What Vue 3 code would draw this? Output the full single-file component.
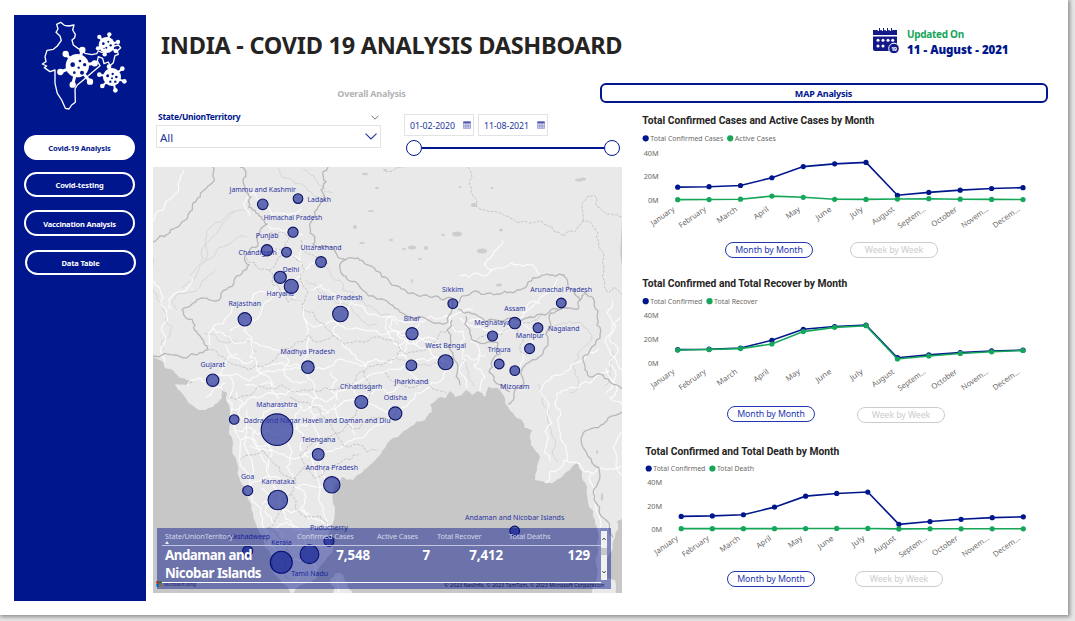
<script setup>
const nav = [
  { label: 'Covid-19 Analysis', cls: 'active' },
  { label: 'Covid-testing', cls: '' },
  { label: 'Vaccination Analysis', cls: 'third' },
  { label: 'Data Table', cls: 'fourth' },
]

const months = ['January', 'February', 'March', 'April', 'May', 'June', 'July', 'August', 'Septem...', 'October', 'Novem...', 'Decem...']
const monthLen = [27, 31, 23, 16.5, 15.5, 17.5, 14, 25.5, 32, 29.5, 31, 31]
const confirmed = [10.7, 11.1, 12.1, 18.6, 28, 30.3, 31.5, 3.9, 6.3, 8.2, 9.6, 10.3]
const recover = [10.4, 10.8, 11.6, 15.5, 26, 29.6, 31, 2.8, 5.4, 7.5, 8.9, 10]
const active = [0.2, 0.3, 0.6, 3.2, 2.2, 0.5, 0.4, 0.7, 1, 0.6, 0.4, 0.3]
const deaths = [0.2, 0.2, 0.2, 0.2, 0.3, 0.4, 0.4, 0, 0.1, 0.1, 0.1, 0.1]

function build(c) {
  const pts = (d) => d.map((v, i) => [c.x0 + i * c.dx, c.y0 - v * c.scale])
  return { ...c, a: pts(confirmed), b: pts(c.data) }
}
const charts = [
  { id: 1, title: 'Total Confirmed Cases and Active Cases by Month', tx: 642.3, tw: 232, ty: 124.4, l1: 'Total Confirmed Cases', l1w: 73, l2: 'Active Cases', l2w: 41, lx2: 730.2, ly: 138.3, x0: 677.7, dx: 31.39, y0: 199.9, scale: 1.19, data: active, top: 110, h: 125 },
  { id: 2, title: 'Total Confirmed and Total Recover by Month', tx: 642.3, tw: 205, ty: 287, l1: 'Total Confirmed', l1w: 52, l2: 'Total Recover', l2w: 43.5, lx2: 709.5, ly: 301.2, x0: 677.7, dx: 31.39, y0: 362.3, scale: 1.18, data: recover, top: 275, h: 125 },
  { id: 3, title: 'Total Confirmed and Total Death by Month', tx: 645.3, tw: 194, ty: 455, l1: 'Total Confirmed', l1w: 52, l2: 'Total Death', l2w: 37, lx2: 712.4, ly: 468.5, x0: 681.2, dx: 31.1, y0: 528.9, scale: 1.17, data: deaths, top: 443, h: 122 },
].map(build)
const line = (p) => p.map((q) => q.join(',')).join(' ')

// [label, left, right, baseline, cx, cy, r]
const states = [
  ['Jammu and Kashmir', 229.5, 296, 192, 262.7, 204.3, 5.3],
  ['Ladakh', 307.5, 331, 202, 298, 198.6, 4.8],
  ['Himachal Pradesh', 263.7, 322.3, 220, 293, 232.2, 5.1],
  ['Punjab', 255.7, 278.5, 238, 267, 250.3, 5.7],
  ['Chandigarh', 238.5, 276.7, 255, 286.5, 252.2, 4.9],
  ['Uttarakhand', 300.5, 341.5, 250, 321, 262, 5.4],
  ['Delhi', 282.8, 299.3, 272, 280.2, 277.3, 6.1],
  ['Haryana', 266.5, 294, 296, 291.3, 286.3, 7.1],
  ['Uttar Pradesh', 317.5, 362.5, 300, 340.4, 314, 7.8],
  ['Rajasthan', 228.5, 261, 306, 244.8, 319.3, 6.7],
  ['Madhya Pradesh', 280.5, 335, 354.3, 307.9, 367.2, 6.3],
  ['Gujarat', 200.5, 225, 367.3, 212.7, 380.2, 6.2],
  ['Sikkim', 442, 463.5, 292, 452.8, 303.6, 4.9],
  ['Arunachal Pradesh', 530.3, 592, 292, 561.3, 303, 4.9],
  ['Bihar', 403.7, 420.3, 321, 412, 333.7, 6.1],
  ['Assam', 504.3, 525.5, 311, 514.8, 323, 5.8],
  ['Meghalaya', 474.3, 510.5, 324.5, 492.5, 336, 5],
  ['Nagaland', 548, 579.5, 331, 538, 327.8, 4.9],
  ['Manipur', 515.8, 544, 337.5, 529.6, 348.6, 5],
  ['West Bengal', 425.3, 466, 348, 445.6, 362.3, 7.5],
  ['Tripura', 487.7, 510.7, 352, 499.2, 364, 4.9],
  ['Mizoram', 500, 529.5, 389, 514.8, 370.6, 4.9],
  ['Jharkhand', 394.5, 428.3, 384, 411.4, 365.4, 5.4],
  ['Chhattisgarh', 340, 382.3, 389, 361.3, 402, 6.5],
  ['Odisha', 383.7, 407, 400, 395.3, 413.5, 6.6],
  ['Maharashtra', 256.3, 297.3, 407, 277, 429.7, 15.8],
  ['Dadra and Nagar Haveli and Daman and Diu', 243.7, 390.5, 423, 234.2, 419.5, 4.8],
  ['Telengana', 301.5, 335.3, 442, 318.2, 454.4, 5.9],
  ['Andhra Pradesh', 305.5, 358, 470, 331.8, 484.8, 8.2],
  ['Goa', 241, 254.3, 479, 247.7, 490.7, 5],
  ['Karnataka', 261.5, 294.5, 484, 277.8, 500, 9.8],
  ['Puducherry', 310, 347.7, 530, 329, 541.3, 5],
  ['Lakshadweep', 226.3, 270, 539, 247.7, 551, 5],
  ['Kerala', 271.3, 291.5, 545, 281.3, 562.3, 11],
  ['Tamil Nadu', 291.3, 328, 576, 309.5, 554.2, 9.4],
  ['Andaman and Nicobar Islands', 465, 564.3, 520, 514.7, 531, 4.9],
]

// Deterministic midpoint jitter, gives coasts and borders an irregular edge
let seed = 11
const rnd = () => ((seed = (seed * 16807) % 2147483647) / 2147483647) - 0.5
function rough(str, closed = false, amp = 0.3) {
  const p = str.trim().split(/\s+/).map((s) => s.split(',').map(Number))
  if (closed) p.push(p[0])
  let out = p
  for (let k = 0; k < 2; k++) {
    const next = [out[0]]
    for (let i = 1; i < out.length; i++) {
      const [x1, y1] = out[i - 1]
      const [x2, y2] = out[i]
      const o = rnd() * amp * 1.6
      next.push([(x1 + x2) / 2 - (y2 - y1) * o, (y1 + y2) / 2 + (x2 - x1) * o], [x2, y2])
    }
    out = next
  }
  return 'M' + out.map((q) => q[0].toFixed(1) + ' ' + q[1].toFixed(1)).join('L') + (closed ? 'Z' : '')
}

const land = rough('150,164 625,164 625,517 617,521 615,537 613,547 605,560 605,577 615,580 617,596 592,596 595,583 597,567 598,550 598,533 595,520 588,503 587,487 582,472 577,463 572,467 562,477 552,483 535,480 537,470 540,457 535,450 530,438 532,430 525,428 522,420 513,413 505,403 500,390 497,388 488,387 485,397 478,391 472,395 466,390 455,397 451,391 446,398 438,398 430,405 432,412 425,420 410,427 398,437 385,448 380,455 367,468 357,475 353,480 342,477 333,493 335,507 333,523 330,540 332,553 323,563 317,577 310,583 298,587 292,594 282,583 273,570 265,547 258,530 253,513 247,497 241,483 237,463 233,443 230,423 230,410 227,393 222,390 222,398 213,407 202,410 192,405 182,393 175,384 186,385 193,382 187,380 175,373 165,368 160,360 150,357', true, 0.18)
const lanka = rough('332,595 330,580 337,573 347,583 352,595', true)

const borders = [
  '153,242 160,236 168,234 175,228 182,222 188,215 193,203 200,197 204,190 212,183 213,175 213,167',
  '240,167 246,172 243,180 245,190 251,197 249,207 256,213 262,219 268,224 260,231 258,243 250,249 245,256 249,265 243,271 235,278 229,287 221,297 209,300 199,299 192,304 182,310 186,318 195,325 198,334 204,343 207,350 198,354 190,355 176,355 153,356',
  '328,167 323,172 326,182 321,190 325,198 318,207 314,218 310,227 315,237 313,244 318,247 327,247 337,255 345,260 340,268 342,274 348,280 360,287 373,296 390,304',
  '345,260 358,258 365,264 376,271 382,277 389,281 397,286 406,291 415,294 424,295 433,297 443,300 452,298 452,310 448,322 430,321 415,319 400,312 390,304',
  '458,303 462,296 475,291 488,293 500,294 510,292 520,290 528,282 540,277 550,275 560,274 566,278 568,287 575,290 580,300 578,309 568,308 557,309 545,315 530,317 512,318 495,320 478,316 465,313 458,309',
  '452,320 447,330 451,342 453,353 458,367 460,385',
  '466,316 470,330 474,341 488,342 498,343 500,354 492,361 489,372 496,383 504,386 510,392',
  '568,308 556,311 549,318 546,334 545,348 539,357 526,364 524,383 514,398 508,404',
  '580,300 585,292 593,298 598,311 597,325 600,338 590,350 583,357 585,370 592,377 600,374 610,382 622,389',
  '622,412 608,418 601,425 588,430 581,438 584,449 592,463 600,476 594,489 596,503 606,520 613,537',
]
const dashed = [
  '385,171 397,168 405,167', '468,167 470,180 473,196 476,205 485,210 500,213 510,218 524,221 537,222 547,225 554,231 564,236 574,232 583,221 592,225 598,233 601,250 604,266 604,280 607,292 614,287 622,300',
  '583,221 582,205 588,196 596,197 600,208 611,214 622,217',
  '246,258 255,263 263,269 272,268 279,257 290,254 297,260 305,270 300,280 308,292 302,305 313,312 324,324 333,335 318,342 308,335 295,344 282,350 274,360 263,367 248,370 236,365 224,357 207,350',
  '268,270 273,285 283,294 288,302 296,300 302,305', '333,335 344,344 361,342 377,337 391,340 401,350 390,360 376,364 364,371 353,383 342,388 325,387 308,391 290,390 271,388 257,387 243,396 228,398',
  '364,371 370,387 365,402 356,412 347,424 336,433 330,420 320,410 305,402 290,397', '336,433 343,445 357,444 367,452 378,450', '347,424 360,428 372,417 389,421 398,410',
  '336,433 326,440 308,446 300,455 304,468 314,478 323,475 336,464 350,460 359,454',
  '304,468 295,478 280,472 270,459 263,450 251,455 240,460', '295,478 291,494 295,509 306,517 320,516 327,524', '291,494 281,507 275,519 267,528 278,537 288,543 284,562 289,580',
  '385,372 395,382 405,386 424,381 435,390 447,394', '401,350 414,352 430,344 440,332 448,330', '474,341 485,336 501,335 516,328 523,335 520,349 527,356', '516,328 530,323 543,314', '270,233 280,232 289,240 284,249 275,248', '301,240 305,252 318,257 329,264',
]
const thin = [
  '153,289 159,302 166,318 172,327 162,341 165,350', '182,288 195,278 203,263 216,252 231,243 247,237', '190,276 198,266 202,249 212,237 224,222 240,210 249,207', '201,265 205,242 208,229 225,218 235,211',
  '177,310 172,302 184,294 202,281 216,269', '278,168 286,178 295,184 307,190 323,196', '303,169 314,176 320,185 333,193', '323,264 331,276 343,290 359,300 374,309 390,315', '305,280 320,293 329,299 345,304 362,321 377,325',
  '226,333 237,342 252,344 257,352', '204,333 218,341 233,339', '545,335 557,325 570,321 582,324 592,335 581,350 573,366 579,382 570,393',
  '538,384 543,397 549,412 551,430 552,452 558,462', '613,350 610,370 604,386', '463,360 469,372 474,386', '395,356 411,359 430,366 448,365',
]
const roads = [
  '153,222 163,210 173,197 178,183 184,170', '153,281 160,289 162,306 168,319 163,333 160,349 165,362', '171,309 169,299 182,292 193,279', '230,331 246,325 260,315 270,300 284,291', '213,328 223,333 231,340 247,339 261,346 278,350 290,350',
  '210,345 209,333 223,324 232,307 254,294 277,287', '250,216 246,200 253,191 262,202 272,215 288,215 301,209', '266,222 274,229 291,231 303,235', '264,258 267,250 279,250 290,256 301,260', '244,320 252,338 250,357 258,371 271,381 279,399',
  '291,287 300,302 304,318 318,326 335,321 351,329 370,331 391,331 413,334 430,342 447,350', '291,287 300,276 310,264 318,260', '303,266 301,250 309,246 323,249', '304,318 307,335 308,353 308,368 315,386 311,406 313,424 317,446 315,471 320,491 323,512 324,530',
  '308,368 291,369 273,372 257,377 243,378 229,375 215,376', '215,376 205,382 196,379 188,386', '215,376 222,370 227,361 238,354', '206,397 215,388 225,383', '229,375 232,391 232,409 235,430 240,451 244,469 252,490 261,508 264,529 274,548 283,568',
  '235,431 248,427 261,433 277,435 292,429 306,426 321,414 340,405 360,402 379,408 394,413 410,402 425,390 441,381 450,366',
  '256,371 270,365 285,365 304,370', '231,409 247,400 261,397 277,394 293,390 309,395 326,402 337,392 352,382 370,375 390,369 409,365 428,361 446,362',
  '321,450 335,449 345,444 360,438 372,429 388,417', '321,450 322,470 332,487', '250,446 264,449 279,454 294,459 311,451', '256,430 256,446 263,460 269,475 277,490 283,510 292,525 307,548 316,571', '262,505 278,502 291,513 309,514 325,524', '247,490 259,481 272,477 284,482 297,488 316,487 331,481',
  '333,315 341,302 331,293 321,285 311,290', '340,314 351,302 364,307 379,316 397,320 413,322 430,316 442,318 458,313 473,310', '391,317 385,328 395,344 406,357 412,374 420,388', '413,334 421,348 435,357 449,365', '397,332 408,340 404,355 391,363 376,359 361,366 346,361 329,367 308,368',
  '338,315 333,333 343,346 355,355 366,369', '447,316 450,326 463,331 461,347 465,360 461,374 467,388', '470,342 480,353 474,365 485,377 480,391', '464,355 475,360 486,355', '460,318 467,324 477,327 488,330 501,333 511,324 523,316 533,306 543,296 553,289 558,279', '508,326 522,324 536,330 532,342 525,353 520,366 517,377', '493,323 482,320 469,321', '541,303 528,304 521,313',
  '460,276 477,273 489,274 492,270 484,264 491,257 497,249 502,240', '491,270 502,268 511,263 524,266 535,268 540,274', '540,391 550,380 563,374 575,363 587,354 599,349', '557,393 567,390 581,384 596,376 610,371', '557,393 560,410 559,429 566,446 567,461', '539,391 549,406 552,423 547,442 550,461', '564,460 580,464 593,474 606,470 621,466', '564,460 550,471 545,483', '591,474 594,490 596,510 599,530 604,550',
  '612,300 607,313 616,326 609,338 618,352 609,364 614,380 606,393', '620,318 612,330 605,341 615,358 622,370', '606,368 616,385 610,398 622,405', '621,432 613,447 616,463 622,475', '608,523 600,538 600,557',
  '284,540 276,529 286,522 295,531 309,531', '309,554 299,561 288,558 280,564', '316,575 304,572 293,581', '339,577 339,595',
  '393,343 405,341 416,345 425,338 438,341', '398,325 392,319 389,327 401,332 411,328 420,323', '352,384 355,393 368,396 374,389 387,393 399,386', '335,404 338,418 349,423 355,435', '300,410 295,420 303,434 300,447 309,457', '247,410 251,421 262,418 270,409 284,406', '241,440 250,438 261,447 274,441 285,444', '280,356 289,361 285,375 294,382 307,382', '225,345 230,354 242,362 253,360',
  '236,392 243,403 240,417 247,432 245,447 252,462 249,477', '268,418 265,440 272,455 268,468', '285,408 296,404 304,411 318,405 329,413', '330,372 337,380 331,391 338,400', '288,440 292,452 287,467 293,478', '245,385 258,388 267,382 276,388', '262,488 270,497 265,512 274,524', '298,488 306,497 301,508 309,520',
]
const lakes = [
  [457, 234, 5, 2.5], [482, 251, 5, 2.5], [412, 247.5, 4, 2], [501, 230, 2, 1.5], [404, 249, 2, 1], [426, 248, 2, 2], [474, 205, 3, 2], [391, 240, 2, 1.2], [579, 180, 4, 1.6], [583, 179, 3, 1.6], [499, 285, 3, 1.5],
  [460, 187, 1.5, 1], [492, 188, 1.5, 1], [365, 174, 3, 1.3], [377, 188, 2, 1.2], [371, 211, 3, 1], [355, 227, 2, 2], [362, 243, 3, 1], [385, 170, 2, 1], [420, 259, 2, 1], [412, 281, 1, 2], [443, 235, 2, 1], [602, 497, 1.2, 4], [597, 452, 1, 2],
]
const landBorders = borders.map((b) => rough(b))
const dashPaths = dashed.map((b) => rough(b))
const thinPaths = thin.map((b) => rough(b))
const roadPaths = roads.map((b) => rough(b))

const viruses = [
  { c: [142, 152], r: 35, w: 9, k: 9.5, knobs: [[107, 117], [157, 105], [194, 145], [180, 200], [128, 209], [91, 171]], holes: [[128, 149, 7], [150, 138, 4], [164, 149, 5], [146, 158, 3.5], [133, 173, 4], [156, 173, 6]] },
  { c: [230, 90], r: 24, w: 6, k: 6.5, knobs: [[208, 66], [238, 58], [264, 81], [257, 108], [224, 118], [204, 100]], holes: [[220, 86, 4], [235, 80, 3], [242, 91, 3.5], [229, 98, 3], [222, 100, 2]] },
  { c: [246, 186], r: 27, w: 6, k: 7, knobs: [[237, 155], [277, 161], [283, 199], [256, 226], [217, 213], [208, 179]], holes: [[233, 182, 4.5], [248, 177, 3.5], [259, 186, 4], [246, 190, 3], [241, 200, 3.5], [256, 200, 3.5]] },
]
</script>

<template>
  <div class="canvas">
    <div class="page">
      <aside class="sidebar">
        <svg class="logo" viewBox="0 0 315 300">
          <path class="outline" d="M80 28L92 22L103 31L116 33L132 30L128 45L136 58L134 68L126 75L130 90L144 100L158 108L165 115L185 119L200 116L205 108L215 112L235 108L250 94L265 90L272 98L262 108L265 118L255 122L250 143L240 152L235 141L222 146L218 130L205 125L202 138L210 152L195 165L180 178L160 195L142 210L135 222L136 262L125 270L117 282L106 280L95 255L82 235L75 205L75 165L60 170L43 158L50 153L37 147L48 140L45 125L51 106L70 103L82 93L94 76L90 63L78 52L84 42Z" />
          <g v-for="(v, i) in viruses" :key="i">
            <line v-for="(k, j) in v.knobs" :key="j" :x1="v.c[0]" :y1="v.c[1]" :x2="k[0]" :y2="k[1]" stroke="#fff" :stroke-width="v.w" />
            <circle v-for="(k, j) in v.knobs" :key="'k' + j" :cx="k[0]" :cy="k[1]" :r="v.k" fill="#fff" />
            <circle :cx="v.c[0]" :cy="v.c[1]" :r="v.r" fill="#fff" />
            <circle v-for="(h, j) in v.holes" :key="'h' + j" :cx="h[0]" :cy="h[1]" :r="h[2]" fill="#00168c" />
          </g>
        </svg>
        <nav>
          <button v-for="n in nav" :key="n.label" :class="n.cls">{{ n.label }}</button>
        </nav>
      </aside>

      <main>
        <header>
          <h1>INDIA - COVID 19 ANALYSIS DASHBOARD</h1>
          <svg class="cal" viewBox="0 0 26 27">
            <path d="M0 2h24v5H0z M0 8.5h24v13L20 23H2a2 2 0 0 1-2-2z" fill="#14198a" />
            <path d="M6 0v3M10 0v3M14 0v3M18 0v3" stroke="#fff" stroke-width="2.4" />
            <path d="M6.5 0v3M10.5 0v3M14.5 0v3M18.5 0v3" stroke="#14198a" stroke-width="1" />
            <g fill="#fff">
              <circle v-for="x in [5, 10, 15, 19.7]" :key="x" :cx="x" cy="12.3" r="1.5" />
              <circle cx="5" cy="18" r="1.5" /><circle cx="10" cy="18" r="1.5" />
            </g>
            <circle cx="21" cy="20.5" r="5.3" fill="#14198a" stroke="#fff" stroke-width="1" />
            <text x="18" y="22.8" font-size="6" font-weight="700" fill="#fff" textLength="6">19</text>
          </svg>
          <div class="updated"><span>Updated On</span><strong>11 - August - 2021</strong></div>
        </header>

        <div class="tabs">
          <div class="tab">Overall Analysis</div>
          <div class="tab selected">MAP Analysis</div>
        </div>

        <div class="content">
          <section class="left">
            <div class="filters">
              <div class="state">
                <div class="statehead">
                  <span>State/UnionTerritory</span>
                  <svg width="8" height="5" viewBox="0 0 8 5"><path d="M.5 .7L4 4.2L7.5 .7" fill="none" stroke="#666" stroke-width=".9" /></svg>
                </div>
                <div class="select">
                  <span>All</span>
                  <svg width="12" height="7" viewBox="0 0 12 7"><path d="M.5 .6L6 6L11.5 .6" fill="none" stroke="#2236a0" stroke-width="1.1" /></svg>
                </div>
              </div>
              <div class="dates">
                <div class="inputs">
                  <div v-for="d in ['01-02-2020', '11-08-2021']" :key="d" class="date">
                    <span>{{ d }}</span>
                    <svg width="8" height="8" viewBox="0 0 8 8"><path d="M.4 1h7.2v6.4H.4zM.4 2.4h7.2M2.8 1v6M5.2 1v6M.4 5h7.2" fill="#d4d7ee" stroke="#7780c4" stroke-width=".6" /><path d="M.4 .4h7.2v1.6H.4z" fill="#4c58b0" /></svg>
                  </div>
                </div>
                <div class="slider"><i></i><b></b><i></i></div>
              </div>
            </div>

            <div class="map">
              <svg viewBox="153 167 469 426" width="469" height="426">
                <rect x="153" y="167" width="469" height="426" fill="#c7c7c7" />
                <path :d="land" fill="#e9e9e9" />
                <path :d="lanka" fill="#e9e9e9" />
                <ellipse v-for="(l, i) in lakes" :key="'l' + i" :cx="l[0]" :cy="l[1]" :rx="l[2]" :ry="l[3]" fill="#cdcdcd" />
                <path v-for="(p, i) in thinPaths" :key="'t' + i" class="thin" :d="p" />
                <path v-for="(p, i) in roadPaths" :key="'r' + i" class="road" :d="p" />
                <path v-for="(p, i) in dashPaths" :key="'d' + i" class="dash" :d="p" />
                <path v-for="(p, i) in landBorders" :key="'b' + i" class="border" :d="p" />
                <circle v-for="s in states" :key="'c' + s[0]" class="bubble" :cx="s[4]" :cy="s[5]" :r="s[6]" />
                <text v-for="s in states" :key="s[0]" class="place" :x="s[1]" :y="s[3]" :textLength="s[2] - s[1]" lengthAdjust="spacingAndGlyphs">{{ s[0] }}</text>
                <path d="M156 581h2.7v2.7H156z" fill="#f25022" /><path d="M159 581h2.7v2.7H159z" fill="#7fba00" />
                <path d="M156 584h2.7v2.7H156z" fill="#00a4ef" /><path d="M159 584h2.7v2.7H159z" fill="#ffb900" />
                <text x="164" y="586" class="credit" textLength="32" lengthAdjust="spacingAndGlyphs">Microsoft Bing</text>
                <text x="444.3" y="587.3" class="credit strong" textLength="160" lengthAdjust="spacingAndGlyphs">© 2023 NavInfo, © 2023 TomTom, © 2023 Microsoft Corporation</text>
              </svg>
              <div class="table">
                <div class="rows">
                  <div class="row head">
                    <span>State/UnionTerritory<em></em></span><span>Confirmed Cases</span><span>Active Cases</span><span>Total Recover</span><span>Total Deaths</span>
                  </div>
                  <div class="row body">
                    <span>Andaman and Nicobar Islands</span><span>7,548</span><span>7</span><span>7,412</span><span>129</span>
                  </div>
                </div>
                <div class="scroll">
                  <svg width="6" height="49" viewBox="0 0 6 49"><path d="M1.3 9L3 7L4.7 9M1.3 40L3 42L4.7 40" fill="none" stroke="#555" stroke-width="1" /><path d="M0 17h6v7H0z" fill="#c8c8c8" /></svg>
                </div>
              </div>
            </div>
          </section>

          <section class="right">
            <article v-for="c in charts" :key="c.id" :class="'chart chart' + c.id">
              <svg :viewBox="`640 ${c.top} 408 ${c.h}`" width="408" :height="c.h">
                <text class="title" :x="c.tx" :y="c.ty" :textLength="c.tw" lengthAdjust="spacingAndGlyphs">{{ c.title }}</text>
                <circle :cx="c.tx + 3.4" :cy="c.ly" r="3.1" fill="#00168c" />
                <text class="tick" :x="c.tx + 8" :y="c.ly + 2.9" :textLength="c.l1w" lengthAdjust="spacingAndGlyphs">{{ c.l1 }}</text>
                <circle :cx="c.lx2" :cy="c.ly" r="3.1" fill="#15a65a" />
                <text class="tick" :x="c.lx2 + 4.6" :y="c.ly + 2.9" :textLength="c.l2w" lengthAdjust="spacingAndGlyphs">{{ c.l2 }}</text>
                <text v-for="t in [40, 20, 0]" :key="t" class="tick" :x="c.x0 - (t ? 34 : 29.8)" :y="c.y0 + 3.2 - t * c.scale" :textLength="t ? 15 : 10.7" lengthAdjust="spacingAndGlyphs">{{ t }}M</text>
                <polyline :points="line(c.a)" fill="none" stroke="#00168c" stroke-width="1.6" />
                <circle v-for="(p, i) in c.a" :key="'a' + i" :cx="p[0]" :cy="p[1]" r="2.6" fill="#00168c" />
                <polyline :points="line(c.b)" fill="none" stroke="#15a65a" stroke-width="1.6" />
                <circle v-for="(p, i) in c.b" :key="'b' + i" :cx="p[0]" :cy="p[1]" r="2.6" fill="#15a65a" />
                <text v-for="(m, i) in months" :key="m" class="tick" text-anchor="end" :textLength="monthLen[i]" lengthAdjust="spacingAndGlyphs" :transform="`translate(${c.x0 + i * c.dx - 2.6} ${c.y0 + 10.5}) rotate(-35)`">{{ m }}</text>
              </svg>
              <div class="toggles"><button>Month by Month</button><button class="off">Week by Week</button></div>
            </article>
          </section>
        </div>
      </main>
    </div>
  </div>
</template>

<style>
body { margin: 0; overflow: hidden; }
</style>
<style scoped>
* { box-sizing: border-box; }
.canvas { width: 1075px; height: 621px; background: #e6e6e6; overflow: hidden; font-family: "Noto Sans", "Open Sans", sans-serif; }
.page { width: 1068px; height: 615px; background: #fff; display: flex; padding: 15px 0 0 14px; box-shadow: 1px 1px 4px 1px rgba(0, 0, 0, .38); }
.sidebar { width: 132px; height: 586px; background: #00168c; flex: none; }
.logo { display: block; width: 105px; height: 100px; margin: 0 0 0 16px; }
.outline { fill: none; stroke: #fff; stroke-width: 4; stroke-linejoin: round; }
nav { display: flex; flex-direction: column; padding: 20px 0 0 10px; }
button { font-family: inherit; padding: 0; margin: 0; white-space: nowrap; }
nav button { width: 111px; height: 25px; border: 2px solid #fff; border-radius: 13px; background: none; color: #fff; font-weight: 700; font-size: 7.5px; letter-spacing: -.12px; margin-bottom: 12px; line-height: 22px; }
nav .active { background: #fff; color: #00168c; }
nav .third { height: 26px; margin: 1px 0 14px; line-height: 24px; letter-spacing: -.19px; }
nav .fourth { margin-left: 1px; line-height: 23px; }
main { flex: 1; min-width: 0; }
header { display: flex; height: 68px; align-items: flex-start; }
h1 { margin: 13px 0 0 15px; width: 712px; font-size: 23.5px; line-height: 34px; font-weight: 700; color: #252423; letter-spacing: -.27px; white-space: nowrap; }
.cal { width: 26px; height: 27px; margin-top: 13px; flex: none; }
.updated { margin: 12px 0 0 8px; display: flex; flex-direction: column; white-space: nowrap; font-weight: 700; }
.updated span { color: #15a65a; font-size: 10px; line-height: 15px; letter-spacing: -.3px; }
.updated strong { color: #00168c; font-size: 11.5px; line-height: 16px; letter-spacing: -.1px; word-spacing: .3px; }
.tabs { display: flex; height: 20px; font-weight: 700; font-size: 9px; line-height: 21px; text-align: center; letter-spacing: -.2px; }
.tab { width: 451px; color: #b3b3b3; margin-right: 2.5px; }
.selected { width: 448px; border: 2px solid #00168c; border-radius: 6px; color: #00168c; line-height: 18px; margin: 0; }
.content { display: flex; padding-top: 7px; }
.left { width: 494px; padding-left: 7px; flex: none; }
.filters { display: flex; height: 57px; }
.state { width: 228px; margin-left: 3px; }
.statehead { display: flex; height: 15px; align-items: center; justify-content: space-between; padding: 0 5px 0 2px; font-size: 8.5px; font-weight: 700; color: #00168c; letter-spacing: -.3px; }
.statehead span { margin-top: -2px; }
.select { display: flex; align-items: center; justify-content: space-between; width: 225px; height: 23px; border: 1px solid #e3e3e3; padding: 0 3px; font-size: 11.5px; color: #2236a0; }
.select span { margin-top: 2px; }
.dates { width: 216px; margin-left: 20px; padding-top: 4px; }
.inputs { display: flex; gap: 4px; }
.date { width: 70px; height: 22px; border: 1px solid #e3e3e3; display: flex; align-items: center; justify-content: space-between; padding: 0 2px 0 5px; font-size: 8.8px; color: #2236a0; letter-spacing: -.1px; }
.date span { margin-top: 2px; }
.slider { display: flex; align-items: center; margin: 4px 0 0 2px; width: 214px; height: 16px; }
.slider i { width: 16px; height: 16px; border: 1.5px solid #00168c; border-radius: 50%; background: #fff; }
.slider b { flex: 1; height: 2px; background: #00168c; }
.map { position: relative; width: 469px; height: 426px; }
.map > svg { display: block; }
.border { fill: none; stroke: #b9b7b7; stroke-width: 1.3; }
.thin { fill: none; stroke: #cfcfcf; stroke-width: .7; }
.dash { fill: none; stroke: #bdbdbd; stroke-width: .8; stroke-dasharray: 3 1.2; }
.road { fill: none; stroke: #fcfcfc; stroke-width: 1.1; }
.bubble { fill: rgba(36, 51, 155, .7); stroke: #0b1163; stroke-width: 1.1; }
.place { font-size: 7.3px; fill: #2c35a0; }
.credit { font-size: 5px; fill: #36395a; }
.strong { fill: #111; }
.table { position: absolute; left: 4px; top: 361px; width: 454px; height: 61px; background: rgba(0, 16, 137, .46); display: flex; color: #fff; }
.rows { width: 444px; padding-left: 5px; }
.row { display: grid; grid-template-columns: 127px 75px 61px 79px 97px; width: 439px; }
.head { height: 18px; border-bottom: 1px solid #c2c5df; width: 439px; font-size: 7.3px; line-height: 17px; color: #d4d7e8; letter-spacing: -.1px; }
.head span { white-space: nowrap; padding-left: 3px; }
.head span:nth-child(n+2) { padding: 0; }
.head span:nth-child(2) { padding-left: 8px; }
.head span:nth-child(3) { padding-left: 13px; }
.head span:nth-child(4) { padding-left: 12px; }
.head span:nth-child(5) { padding-left: 5px; }
.head em { display: block; width: 0; border: 2.5px solid transparent; border-top: 0; border-bottom: 3px solid #eee; margin-top: -4px; }
.body { height: 37px; border-bottom: 1px solid #fff; font-size: 13.3px; line-height: 18px; font-weight: 700; letter-spacing: -.1px; }
.body span { text-align: right; }
.body span:first-child { text-align: left; padding-left: 3px; width: 110px; letter-spacing: -.48px; }
.body span:nth-child(2) { margin-right: -6px; }
.body span:nth-child(3) { margin-right: -5px; }
.body span:nth-child(4) { margin-right: 1px; }
.body span:nth-child(5) { padding-right: 11px; }
.scroll { width: 6px; height: 49px; background: #f0f0f0; margin-top: 3px; }
.scroll svg { display: block; }
.chart > svg { display: block; }
.chart2 { margin-top: 17px; }
.chart3 { margin-top: 21px; }
.title { font-family: Roboto, sans-serif; font-weight: 700; font-size: 11.8px; fill: #252423; }
.tick { font-size: 7.6px; fill: #6b6967; }
.toggles { display: flex; padding: 7px 0 0 85px; gap: 37px; }
.chart2 .toggles { padding: 6px 0 0 87px; gap: 42px; }
.chart3 .toggles { padding: 6px 0 0 87px; gap: 40px; }
.toggles button { width: 88px; height: 16px; border: 1px solid #2236b0; border-radius: 8px; background: #fff; color: #2236b0; font-size: 8.8px; line-height: 14px; letter-spacing: -.1px; }
.toggles .off { border-color: #ccc; color: #ccc; }
.chart2 .off { position: relative; top: 1px; }
</style>
